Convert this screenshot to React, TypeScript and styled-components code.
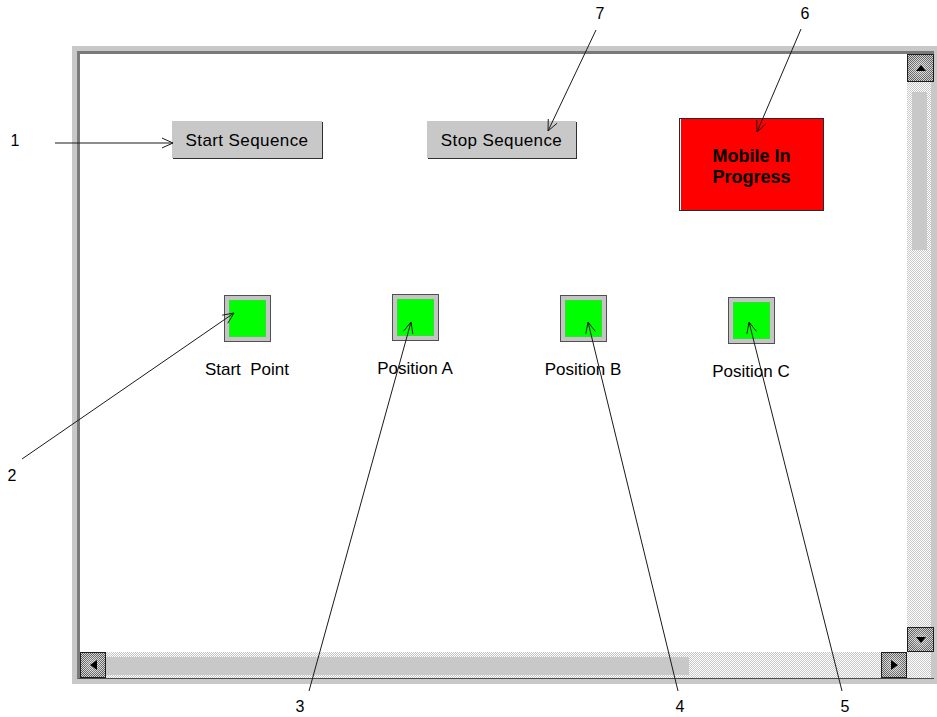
import React from 'react';
import styled, { createGlobalStyle } from 'styled-components';

const GlobalStyle = createGlobalStyle`
  html, body {
    margin: 0;
    padding: 0;
    background: #ffffff;
  }
  body {
    font-family: "Liberation Sans", Arial, sans-serif;
    color: #000;
  }
`;

const indicators = [
  { label: 'Start\u00a0 Point', offset: 1 },
  { label: 'Position A', offset: 0 },
  { label: 'Position B', offset: 1 },
  { label: 'Position C', offset: 3 },
];

// callout lines: from number to the tip of the arrow
const callouts = [
  { n: '1', nx: 15, ny: 141, x1: 55, y1: 143, x2: 173, y2: 143 },
  { n: '2', nx: 12, ny: 476, x1: 22, y1: 459, x2: 234, y2: 313 },
  { n: '3', nx: 300, ny: 707, x1: 309, y1: 691, x2: 411, y2: 322 },
  { n: '4', nx: 680, ny: 707, x1: 678, y1: 691, x2: 588, y2: 322 },
  { n: '5', nx: 845, ny: 707, x1: 842, y1: 691, x2: 749, y2: 322 },
  { n: '6', nx: 805, ny: 14, x1: 801, y1: 29, x2: 757, y2: 132 },
  { n: '7', nx: 600, ny: 14, x1: 596, y1: 30, x2: 548, y2: 131 },
];

function arrowHead(x1: number, y1: number, x2: number, y2: number) {
  const a = Math.atan2(y2 - y1, x2 - x1);
  const len = 12;
  const spread = 0.42;
  const p1 = [x2 - len * Math.cos(a - spread), y2 - len * Math.sin(a - spread)];
  const p2 = [x2 - len * Math.cos(a + spread), y2 - len * Math.sin(a + spread)];
  return `M${p1[0]},${p1[1]} L${x2},${y2} L${p2[0]},${p2[1]}`;
}

export default function App() {
  return (
    <Page>
      <GlobalStyle />
      <Frame>
        <Inner>
          <Screen>
            <TopRow>
              <PushButton $w={150} $ml={0}>Start Sequence</PushButton>
              <PushButton $w={149} $ml={105}>Stop Sequence</PushButton>
              <StatusBox>
                Mobile In
                <br />
                Progress
              </StatusBox>
            </TopRow>
            <IndicatorRow>
              {indicators.map((ind) => (
                <Indicator key={ind.label} $offset={ind.offset}>
                  <Lamp>
                    <LampFace />
                  </Lamp>
                  <LampLabel>{ind.label}</LampLabel>
                </Indicator>
              ))}
            </IndicatorRow>
          </Screen>

          <VScroll>
            <ScrollButton $h={28}>
              <Triangle $dir="up" />
            </ScrollButton>
            <VTrack>
              <VThumb />
            </VTrack>
            <ScrollButton $h={25}>
              <Triangle $dir="down" />
            </ScrollButton>
          </VScroll>

          <HScroll>
            <ScrollButton $w={26}>
              <Triangle $dir="left" />
            </ScrollButton>
            <HTrack>
              <HThumb />
            </HTrack>
            <ScrollButton $w={26}>
              <Triangle $dir="right" />
            </ScrollButton>
          </HScroll>
          <Corner />
        </Inner>
      </Frame>

      <Overlay width={937} height={717} viewBox="0 0 937 717">
        {callouts.map((c) => (
          <g key={c.n} stroke="#1a1a1a" strokeWidth={1} fill="none">
            <line x1={c.x1} y1={c.y1} x2={c.x2} y2={c.y2} />
            <path d={arrowHead(c.x1, c.y1, c.x2, c.y2)} />
          </g>
        ))}
      </Overlay>
      {callouts.map((c) => (
        <CalloutNumber key={c.n} $x={c.nx} $y={c.ny}>
          {c.n}
        </CalloutNumber>
      ))}
    </Page>
  );
}

const Page = styled.div`
  position: relative;
  width: 937px;
  height: 717px;
  box-sizing: border-box;
  padding: 46px 0 0 72px;
  overflow: hidden;
`;

const Frame = styled.div`
  width: 865px;
  height: 638px;
  box-sizing: border-box;
  background: #c8c8c8;
  padding: 5px 3px 5px 5px;
`;

const Inner = styled.div`
  height: 100%;
  box-sizing: border-box;
  display: grid;
  grid-template-columns: 1fr 27px;
  grid-template-rows: 1fr 26px;
  border-top: 3px solid #7a7a7a;
  border-left: 3px solid #7a7a7a;
  border-bottom: 1px solid #4a4a4a;
  background: #ffffff;
`;

const Screen = styled.div`
  background: #ffffff;
  padding-top: 64px;
  overflow: hidden;
`;

const TopRow = styled.div`
  display: flex;
  align-items: flex-start;
  padding-left: 92px;
`;

const PushButton = styled.div<{ $w: number; $ml: number }>`
  width: ${(p) => p.$w}px;
  height: 37px;
  box-sizing: border-box;
  padding-top: 3px;
  margin-top: 3px;
  margin-left: ${(p) => p.$ml}px;
  background: #c8c8c8;
  box-shadow: 1px 1px 0 #303030;
  display: flex;
  align-items: center;
  justify-content: center;
  font-size: 17px;
  letter-spacing: 0.4px;
`;

const StatusBox = styled.div`
  width: 143px;
  margin-left: 103px;
  background: #ff0000;
  border: 1px solid #2a2a2a;
  box-shadow: inset 1px 0 0 #ffffff;
  display: flex;
  align-items: center;
  justify-content: center;
  text-align: center;
  font-weight: bold;
  font-size: 18px;
  line-height: 21px;
  padding-top: 4px;
  box-sizing: content-box;
  height: 87px;
`;

const IndicatorRow = styled.div`
  display: grid;
  grid-template-columns: repeat(4, 168px);
  padding-left: 83px;
  margin-top: 83px;
`;

const Indicator = styled.div<{ $offset: number }>`
  display: flex;
  flex-direction: column;
  align-items: center;
  margin-top: ${(p) => p.$offset}px;
`;

const Lamp = styled.div`
  width: 47px;
  height: 47px;
  border: 1px solid #505050;
  background: #c4c4c4;
  padding: 4px;
  box-sizing: border-box;
`;

const LampFace = styled.div`
  width: 100%;
  height: 100%;
  background: #00ff00;
  box-shadow: inset 0 0 0 1px #2fe02f;
`;

const LampLabel = styled.div`
  margin-top: 19px;
  font-size: 17px;
  line-height: 18px;
  white-space: nowrap;
`;

const dither = (a: string, b: string) =>
  `repeating-conic-gradient(${a} 0 25%, ${b} 0 50%) 0 0 / 2px 2px`;

const VScroll = styled.div`
  display: flex;
  flex-direction: column;
  background: #c8c8c8;
`;

const HScroll = styled.div`
  display: flex;
  background: ${dither('#c8c8c8', '#ffffff')};
`;

const ScrollButton = styled.div<{ $w?: number; $h?: number }>`
  ${(p) => (p.$w ? `width: ${p.$w}px;` : 'width: 100%;')}
  ${(p) => (p.$h ? `height: ${p.$h}px;` : 'height: 100%;')}
  flex: none;
  box-sizing: border-box;
  border: 1px solid #1e1e1e;
  background: radial-gradient(circle, rgba(255, 255, 255, 0.35), rgba(255, 255, 255, 0) 70%),
    ${dither('#5e5e5e', '#d4d4d4')};
  display: flex;
  align-items: center;
  justify-content: center;
`;

const Triangle = styled.div<{ $dir: 'up' | 'down' | 'left' | 'right' }>`
  width: 0;
  height: 0;
  ${(p) =>
    p.$dir === 'up'
      ? 'border-left: 5px solid transparent; border-right: 5px solid transparent; border-bottom: 6px solid #000;'
      : p.$dir === 'down'
      ? 'border-left: 5px solid transparent; border-right: 5px solid transparent; border-top: 6px solid #000;'
      : p.$dir === 'left'
      ? 'border-top: 5px solid transparent; border-bottom: 5px solid transparent; border-right: 7px solid #000;'
      : 'border-top: 5px solid transparent; border-bottom: 5px solid transparent; border-left: 7px solid #000;'}
`;

const VTrack = styled.div`
  flex: 1;
  background: ${dither('#c8c8c8', '#ffffff')};
  margin-right: 3px;
  padding: 10px 0 0 5px;
`;

const VThumb = styled.div`
  width: 15px;
  height: 158px;
  background: #c8c8c8;
`;

const HTrack = styled.div`
  flex: 1;
  padding-top: 5px;
`;

const HThumb = styled.div`
  width: 583px;
  height: 18px;
  background: #c8c8c8;
`;

const Corner = styled.div`
  background: ${dither('#c8c8c8', '#ffffff')};
  border-right: 3px solid #c8c8c8;
`;

const Overlay = styled.svg`
  position: absolute;
  left: 0;
  top: 0;
  pointer-events: none;
`;

const CalloutNumber = styled.span<{ $x: number; $y: number }>`
  position: absolute;
  left: ${(p) => p.$x}px;
  top: ${(p) => p.$y}px;
  transform: translate(-50%, -50%);
  font-size: 16px;
  line-height: 16px;
`;
